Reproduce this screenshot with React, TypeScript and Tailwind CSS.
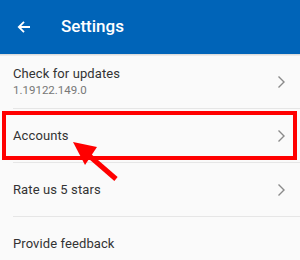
import React from "react";

const Chevron = () => (
  <svg width="9" height="14" viewBox="0 0 9 14" fill="none" className="shrink-0">
    <path d="M1.5 1.5 L7 7 L1.5 12.5" stroke="#8a8a8a" strokeWidth="1.4" />
  </svg>
);

const Row = ({ title, sub, chevron = true }: { title: string; sub?: string; chevron?: boolean }) => (
  <div className="h-[54px] flex items-center pl-[13px] pr-[14px] relative">
    <div className="flex-1 flex flex-col">
      <div className="text-[13px] leading-[16px] text-[#333333] tracking-[0.1px]">{title}</div>
      {sub && <div className="text-[11.5px] leading-[15px] text-[#777777] mt-[1px]">{sub}</div>}
    </div>
    {chevron && <Chevron />}
    <div className="absolute left-[13px] right-0 bottom-0 h-px bg-[#e6e6e6]" />
  </div>
);

export default function App() {
  return (
    <div className="w-[300px] h-[260px] overflow-hidden bg-[#fafafa] relative" style={{ fontFamily: "Roboto, 'Liberation Sans', sans-serif" }}>
      <div className="h-[54px] bg-[#0064b8] flex items-center">
        <svg width="14" height="14" viewBox="0 0 14 14" className="ml-[17px]" fill="none">
          <path d="M13 7 H2 M7 1.8 L1.8 7 L7 12.2" stroke="white" strokeWidth="1.8" />
        </svg>
        <span className="ml-[30px] text-white text-[17px] font-medium">Settings</span>
      </div>
      <div className="h-[2px] bg-gradient-to-b from-[#d5d5d5] to-[#f3f3f3]" />
      <div className="-mt-[1px]">
        <Row title="Check for updates" sub="1.19122.149.0" />
        <Row title="Accounts" />
        <Row title="Rate us 5 stars" />
        <Row title="Provide feedback" chevron={false} />
      </div>
      <div className="absolute left-[2px] top-[111px] w-[295px] h-[49px] border-[4px] border-[#ff0000]" />
      <svg className="absolute left-0 top-0" width="300" height="260" viewBox="0 0 300 260">
        <line x1="116" y1="179" x2="86" y2="153" stroke="#ff0000" strokeWidth="5" />
        <polygon points="73,142 97,147 85,165" fill="#ff0000" />
      </svg>
    </div>
  );
}
